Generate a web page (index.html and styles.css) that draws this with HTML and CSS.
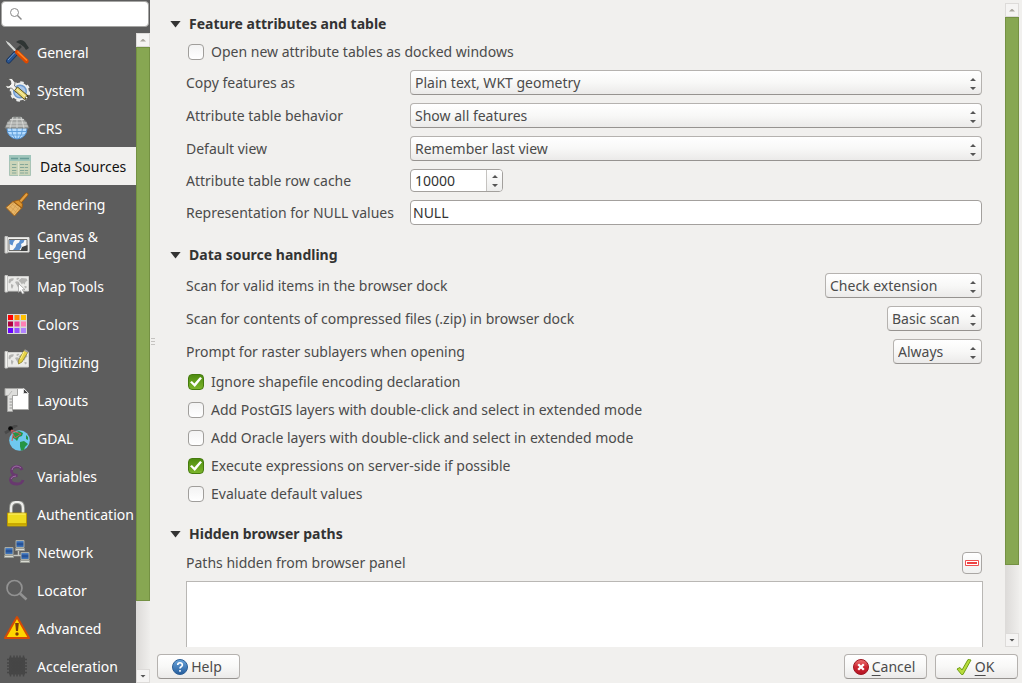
FILE: index.html
```html
<!DOCTYPE html>
<html lang="en">
<head>
<meta charset="utf-8">
<title>Options - Data Sources</title>
<link rel="stylesheet" href="styles.css">
</head>
<body>
<svg class="defs" aria-hidden="true">
  <defs>
    <linearGradient id="blueFill" x1="0" y1="0" x2="0" y2="1"><stop offset="0" stop-color="#6aa5dc"/><stop offset="1" stop-color="#245c9c"/></linearGradient>
    <linearGradient id="screen" x1="0" y1="0" x2="0" y2="1"><stop offset="0" stop-color="#5d94d6"/><stop offset="0.5" stop-color="#1d4a92"/><stop offset="1" stop-color="#4b82c5"/></linearGradient>
    <linearGradient id="redFill" x1="0" y1="0" x2="0" y2="1"><stop offset="0" stop-color="#ee7474"/><stop offset="0.5" stop-color="#cc2530"/><stop offset="1" stop-color="#b51425"/></linearGradient>
    <symbol id="arrows" viewBox="0 0 8 14">
      <path d="M1 4h6L4 1z M1 10h6L4 13z" fill="#555"/>
    </symbol>
    <symbol id="map" viewBox="0 0 26 26">
      <path d="M3 5.5h21.500v14.500H3z" fill="#ebebe9" stroke="#d0d0ce"/>
      <path d="M1 4.500h2.500v16.500H1z" fill="#f4f4f2" stroke="#c6c6c4"/>
      <path d="M5 8.500q3-2 5-1l-1 2-2 1-1 2-1.500-1zM7 13l2.500 1-.5 2-1 2-1-2zM12 8l2-1.500 1.500 1-2 1.500zM11 11q2-1.500 4 0l.5 2-1.500 3.500-1.500-3zM14.500 9.500l3-2.500 5 .5 1 2-2 1.500-1 2.500-1.500-1.500-1 1.500-1.500-2zM20 15.500q2-1 3 .5l-1.500 1.500z" fill="#b4b4b2"/>
    </symbol>
    <symbol id="pc" viewBox="0 0 10 11">
      <path d="M1 .5h8v7H1z" fill="url(#screen)" stroke="#a9aca5"/>
      <path d="M.5 8.5h9v2h-9z" fill="#d8dad2" stroke="#999b94"/>
    </symbol>
  </defs>
</svg>
<div class="window">
  <aside class="sidebar">
    <label class="search">
      <svg class="search-icon" viewBox="0 0 14 14"><circle cx="5.5" cy="5.5" r="4" fill="none" stroke="#8a8a8a"/><path d="M8.5 8.5l4 4" stroke="#8a8a8a" stroke-width="1.5"/></svg>
      <input type="text" aria-label="Search options">
    </label>
    <div class="pages">
      <nav class="page-list">
        <a class="page" href="#general">
          <svg viewBox="0 0 26 26"><path d="M1.500 1.500l4 2.500 8.500 9-1.500 1.500L3.500 5z" fill="#d7d9d6"/><path d="M11.500 14.500l-7 7.500" stroke="#15315c" stroke-width="5" stroke-linecap="round"/><path d="M11.500 14.500l-7 7.500" stroke="#2c5690" stroke-width="3.500" stroke-linecap="round"/><path d="M10.500 14l-6.500 7" stroke="#6f97c9"/><path d="M12 3q5-4 9 0l4 6-3 2-2-3q-3-3-8-5z" fill="#2f3534"/><path d="M17 7l-4.500 4.500" stroke="#383c3b" stroke-width="2.500"/><path d="M13 13l9.500 9.200" stroke="#dc4900" stroke-width="4.400" stroke-linecap="round"/><path d="M13.500 12.500l9.500 9" stroke="#ff8422" stroke-width="1.600"/></svg>
          <span>General</span></a>
        <a class="page" href="#system">
          <svg viewBox="0 0 26 26"><circle cx="16" cy="14.500" r="6.500" fill="#a9c6e8" stroke="#6c9bd2" stroke-width="2"/><circle cx="16" cy="14.500" r="8" fill="none" stroke="#eceeed" stroke-width="2"/><circle cx="16" cy="14.500" r="9.300" fill="none" stroke="#eceeed" stroke-width="2" stroke-dasharray="3.500 3.800"/><path d="M4 1.500l4 0 3 4-.5 3.500 5 4-3 3-5-5-4 .5-2.500-3 4 .5 2-2-.5-3z" fill="#f3f3f1" stroke="#4a4a48" stroke-width=".7"/><path d="M10.500 13.500l3-3.500 10 8.500-3 4z" fill="#e8d875" stroke="#5d521b"/><path d="M13 12.500l8.500 7" stroke="#fff5b0"/><path d="M23.500 17.500l1 3-3 2.500-1-2z" fill="#383113"/><circle cx="22.500" cy="20.500" r="1" fill="#fff"/></svg>
          <span>System</span></a>
        <a class="page" href="#crs">
          <svg viewBox="0 0 26 26"><circle cx="13" cy="14" r="10" fill="#b5dcff" stroke="#528cc9"/><path d="M13 13v11M3.500 16.500h19M5 20h16M7.500 13q0 7 4 11M18.500 13q0 7-4 11" fill="none" stroke="#609fdb"/><path d="M9 2h8l5 4.500 3 6.500H1l3-6.500z" fill="#a5a7a5" stroke="#7d807f"/><path d="M6 4.500h14M3 8h20M2 11h22M9 2L6 13M13 2v11M17 2l3 11" fill="none" stroke="#dcdddb" stroke-width=".8"/></svg>
          <span>CRS</span></a>
        <a class="page selected" href="#data-sources" aria-current="page">
          <svg viewBox="0 0 24 24"><path d="M1.500 1.500h21v20h-21z" fill="#cbd4b8" stroke="#a9c3b5"/><path d="M1 1h22v6H1z" fill="#9fc5bb"/><path d="M3 4.500h7M12 4.500h9" stroke="#679b95" stroke-width="1.300"/><path d="M4 10.500h5M12 10.500h8M4 13.500h5M12 13.500h8M4 16.500h5M12 16.500h8M4 19h5M12 19h8" stroke="#86a798" stroke-width="1.200" stroke-dasharray="4 .7"/><path d="M10.500 8v14" stroke="#e2e6d3"/></svg>
          <span>Data Sources</span></a>
        <a class="page" href="#rendering">
          <svg viewBox="0 0 26 26"><path d="M15 12l7.500-8.500" stroke="#9d5a0c" stroke-width="4" stroke-linecap="round"/><path d="M15 12l7.500-8.500" stroke="#e2a044" stroke-width="2.200" stroke-linecap="round"/><path d="M9 10.500l8.500 6.500-7 8L2 16.500z" fill="#e7b567" stroke="#a56417"/><path d="M5 14.500l7.500 7M7.500 12.500l7.500 6M4.500 18l6-7M7 21l6-8M10 23l6-8" stroke="#c99142" stroke-width=".5"/><path d="M9.500 10.500l5-1.500 4 4-.5 4z" fill="#dc952f" stroke="#9e5d12"/></svg>
          <span>Rendering</span></a>
        <a class="page wrapped" href="#canvas">
          <svg viewBox="0 0 26 26"><path d="M3 5.500h22v14.500H3z" fill="#efefed" stroke="#d9d9d7"/><path d="M1 4.500h2.500v16.500H1z" fill="#e6e6e4" stroke="#c2c2c0"/><path d="M5 7.500h18v11H5z" fill="#f8f8f7" stroke="#6b6b69"/><path d="M5.500 8h5.500l-1.500 2-1 3.500-3-1.500zM11.500 15l1-3 2.500-1.500 1-2.500h4.500l-1 2.500-2.500 1.500.5 2.500-2 3.500H9z" fill="#5b90cf"/><path d="M16.500 19l1.500-4 5.500-2v6z" fill="#3f4141"/></svg>
          <span>Canvas &amp; Legend</span></a>
        <a class="page" href="#map-tools">
          <svg class="raised" viewBox="0 2 26 26"><use href="#map" width="26" height="26"/><path d="M14.500 12.500v9l2-1.800 2 3.300 1.800-.8-2-3.500h2.700z" fill="#fff" stroke="#979795" stroke-width=".7"/></svg>
          <span>Map Tools</span></a>
        <a class="page" href="#colors">
          <svg viewBox="0 -1 26 26"><path d="M3 2h20v20H3z" fill="#d8d8d6"/><path d="M4 3h5v5H4z" fill="#f00"/><path d="M10.500 3h5v5h-5z" fill="#ff8c00"/><path d="M17 3h5v5h-5z" fill="#ffc000"/><path d="M4 9.500h5v5H4z" fill="#b00040"/><path d="M10.500 9.500h5v5h-5z" fill="#e83e9b"/><path d="M17 9.500h5v5h-5z" fill="#ff80b4"/><path d="M4 16h5v5H4z" fill="#6900ff"/><path d="M10.500 16h5v5h-5z" fill="#934fff"/><path d="M17 16h5v5h-5z" fill="#b183ff"/></svg>
          <span>Colors</span></a>
        <a class="page" href="#digitizing">
          <svg viewBox="0 2 26 26"><use href="#map" width="26" height="26"/><path d="M20.500 3l3.500 2-6 10-3.500 2 .2-4z" fill="#e6d246" stroke="#8e8127" stroke-width=".8"/><path d="M20 4.500L16.500 12" stroke="#fff28b"/><path d="M20.500 3l3.500 2" stroke="#9d9d9b" stroke-width="2"/></svg>
          <span>Digitizing</span></a>
        <a class="page" href="#layouts">
          <svg viewBox="0 0 26 26"><path d="M8 1.500h12l4.500 5v16H8z" fill="#fff" stroke="#a8a8a6"/><path d="M19.500 1.500v5h5z" fill="#444" stroke="#ddd"/><path d="M1 1.500h12.500v7H8.500v16H3.500v-16H1z" fill="#dededc" stroke="#a4a4a2"/><path d="M5.500 12H8M5.500 15H8M5.500 18H8M5.500 21H8" stroke="#858583" stroke-width=".8"/><path d="M4 9l4-5" stroke="#b9b9b7"/></svg>
          <span>Layouts</span></a>
        <a class="page" href="#gdal">
          <svg viewBox="0 -1 26 26"><path d="M1 7l5-3M8 2l5-3" stroke="#494949" stroke-width="3"/><circle cx="6.500" cy="2.500" r="2.300" fill="#080808"/><circle cx="15.500" cy="14.500" r="10.300" fill="#6fc8ef"/><path d="M9 7l6-2 4 2-1 3-3 1-2 4-2-2-2-1zM16 16l4-1 4 3-3 3-1 3-3 .5-1-4zM22 9l2 2v3l-2-1z" fill="#259545"/><path d="M7 4l4 8 6-4zM9 9l-1 6" fill="none" stroke="#d35858"/></svg>
          <span>GDAL</span></a>
        <a class="page" href="#variables">
          <svg viewBox="0 -1 26 26"><path d="M18 6q-1-3.500-5-3.500Q7.500 3 7.500 7q0 4 6 4.500Q6.500 12 6.500 16q.5 4 6.500 4 5 0 6-4" fill="none" stroke="#68396f" stroke-width="2.800"/><path d="M17 4q-2-2-5-2-4 1-4 4M7 15q1-3 5-3" fill="none" stroke="#9c70a4"/></svg>
          <span>Variables</span></a>
        <a class="page" href="#authentication">
          <svg viewBox="0 0 26 26"><path d="M7 14V7q0-6 6-6t6 6v7" fill="none" stroke="#8b8d88" stroke-width="4"/><path d="M7 14V7q0-6 6-6t6 6v7" fill="none" stroke="#ededeb" stroke-width="2.200"/><path d="M3.500 12h19v13h-19z" fill="#eedb20" stroke="#ba9700"/><path d="M4 22h18v2.500H4z" fill="#c9a900"/><path d="M4.500 13h17" stroke="#fff477"/></svg>
          <span>Authentication</span></a>
        <a class="page" href="#network">
          <svg viewBox="0 0 26 26"><path d="M14.500 11v5M8 16.500h10" stroke="#c5c7c1" stroke-width="1.500"/><use href="#pc" x="11" y="1" width="10" height="11"/><use href="#pc" x="0" y="8" width="10" height="11"/><use href="#pc" x="16" y="13" width="10" height="11"/></svg>
          <span>Network</span></a>
        <a class="page" href="#locator">
          <svg viewBox="0 -1 26 26"><circle cx="10.500" cy="10" r="7.500" fill="none" stroke="#929292" stroke-width="1.700"/><path d="M16 15.500l6.500 6" stroke="#929292" stroke-width="2.500"/></svg>
          <span>Locator</span></a>
        <a class="page" href="#advanced">
          <svg viewBox="0 0 26 26"><path d="M13 2l12 21H1z" fill="#ffd500" stroke="#d54a05" stroke-width="2" stroke-linejoin="round"/><path d="M11.200 8h3.600l-.8 8h-2z" fill="#7a3a09"/><circle cx="13" cy="19" r="1.700" fill="#7a3a09"/></svg>
          <span>Advanced</span></a>
        <a class="page" href="#acceleration">
          <svg viewBox="0 -1 26 26"><path d="M5 3.500h16v17H5z" fill="#464646"/><path d="M6.500 1.500v21M10 1.500v21M13 1.500v21M16 1.500v21M19.500 1.500v21M3 5.500h20M3 9h20M3 12h20M3 15h20M3 18.500h20" stroke="#464646" stroke-width="1.500"/></svg>
          <span>Acceleration</span></a>
      </nav>
      <div class="scrollbar list-bar">
        <button class="step up" type="button" aria-label="Scroll up"></button>
        <div class="track"><div class="thumb"></div></div>
        <button class="step down" type="button" aria-label="Scroll down"></button>
      </div>
    </div>
  </aside>
  <div class="splitter"><i></i><i></i><i></i></div>
  <main class="main">
    <div class="scroll-area">
      <form class="content">
        <section>
          <h2>Feature attributes and table</h2>
          <div class="body">
            <label class="check first"><input type="checkbox">Open new attribute tables as docked windows</label>
            <div class="form">
              <label for="copy">Copy features as</label>
              <span class="combo"><select id="copy"><option>Plain text, WKT geometry</option></select><svg><use href="#arrows"/></svg></span>
              <label for="behavior">Attribute table behavior</label>
              <span class="combo"><select id="behavior"><option>Show all features</option></select><svg><use href="#arrows"/></svg></span>
              <label for="view">Default view</label>
              <span class="combo"><select id="view"><option>Remember last view</option></select><svg><use href="#arrows"/></svg></span>
              <label for="cache">Attribute table row cache</label>
              <span class="spin"><input id="cache" type="text" value="10000"><span class="spin-arrows"><svg><use href="#arrows"/></svg></span></span>
              <label for="null">Representation for NULL values</label>
              <input class="field" id="null" type="text" value="NULL">
            </div>
          </div>
        </section>
        <section class="sources">
          <h2>Data source handling</h2>
          <div class="body">
            <div class="rows">
              <div class="row"><label for="scan">Scan for valid items in the browser dock</label>
                <span class="combo w-l"><select id="scan"><option>Check extension</option></select><svg><use href="#arrows"/></svg></span></div>
              <div class="row"><label for="zip">Scan for contents of compressed files (.zip) in browser dock</label>
                <span class="combo w-m"><select id="zip"><option>Basic scan</option></select><svg><use href="#arrows"/></svg></span></div>
              <div class="row"><label for="prompt">Prompt for raster sublayers when opening</label>
                <span class="combo w-s"><select id="prompt"><option>Always</option></select><svg><use href="#arrows"/></svg></span></div>
            </div>
            <div class="checks">
              <label class="check"><input type="checkbox" checked>Ignore shapefile encoding declaration</label>
              <label class="check"><input type="checkbox">Add PostGIS layers with double-click and select in extended mode</label>
              <label class="check"><input type="checkbox">Add Oracle layers with double-click and select in extended mode</label>
              <label class="check"><input type="checkbox" checked>Execute expressions on server-side if possible</label>
              <label class="check"><input type="checkbox">Evaluate default values</label>
            </div>
          </div>
        </section>
        <section>
          <h2>Hidden browser paths</h2>
          <div class="body">
            <div class="row paths"><label for="paths">Paths hidden from browser panel</label>
              <button class="remove" type="button" aria-label="Remove path"><svg viewBox="0 0 14 6"><path d="M.5.5h13v5H.5z" fill="#fff" stroke="#ee5050"/><path d="M2 2h10v2H2z" fill="#ee4242"/></svg></button></div>
            <select class="path-list" id="paths" size="8"></select>
          </div>
        </section>
      </form>
      <div class="scrollbar main-bar">
        <button class="step up" type="button" aria-label="Scroll up"></button>
        <div class="track"><div class="thumb"></div></div>
        <button class="step down" type="button" aria-label="Scroll down"></button>
      </div>
    </div>
    <footer class="buttons">
      <button class="btn help" type="button"><svg viewBox="0 0 16 16"><circle cx="8" cy="8" r="7.500" fill="url(#blueFill)" stroke="#2d5f96"/><path d="M5.700 6q0-2.300 2.300-2.300T10.400 6q0 1-1.200 1.700T8 9.600M8 11v1.700" fill="none" stroke="#fff" stroke-width="1.600"/></svg><span>Help</span></button>
      <button class="btn" type="button"><svg viewBox="0 0 16 16"><circle cx="8" cy="8" r="7.500" fill="url(#redFill)" stroke="#9d1722"/><path d="M5.200 5.200l5.600 5.600M10.800 5.200l-5.600 5.600" stroke="#fff" stroke-width="2.300"/></svg><span><u>C</u>ancel</span></button>
      <button class="btn" type="button"><svg viewBox="0 0 16 16"><path d="M1 10l3-1.500 2 2.500 6-10.500 3 .5L7 15.500H5.500z" fill="#b8dc3c" stroke="#6f9e16"/></svg><span><u>O</u>K</span></button>
    </footer>
  </main>
</div>
</body>
</html>
```
FILE: styles.css
```css
* { box-sizing: border-box; }
body {
  margin: 0;
  background: #f1f0ee;
  color: #4b4b4b;
  font: 14px/20px "Noto Sans", "Open Sans", sans-serif;
}
button, input, select { font: inherit; color: inherit; margin: 0; }
.defs { position: absolute; width: 0; height: 0; }
.window { display: flex; height: 100vh; overflow: hidden; }

/* Sidebar */
.sidebar { display: flex; flex-direction: column; flex: none; width: 150px; background: #5d5d5d; }
.search {
  display: flex;
  align-items: center;
  height: 26px;
  margin: 1px 1px 0;
  padding-left: 7px;
  background: #fff;
  border: 1px solid #a5a5a3;
  border-radius: 4px;
}
.search-icon { flex: none; width: 14px; height: 14px; }
.search input { width: 100%; min-width: 0; border: 0; background: none; outline: 0; }
.pages { display: flex; flex: 1; min-height: 0; padding-top: 6px; }
.page-list { flex: 1; min-width: 0; overflow: hidden; }
.page {
  display: flex;
  align-items: center;
  gap: 7px;
  height: 38px;
  padding-left: 4px;
  color: #fff;
  line-height: 17px;
  text-decoration: none;
  white-space: nowrap;
}
.page svg { flex: none; width: 26px; height: 26px; }
.page.wrapped { height: 44px; white-space: normal; }
.page.wrapped span { width: 70px; }
.page.selected { gap: 8px; padding-left: 8px; background: #f1f0ee; color: #111; }
.page.selected svg { width: 24px; height: 24px; }

/* Scrollbars */
.scrollbar { display: flex; flex-direction: column; flex: none; width: 14px; }
.track { flex: 1; background: linear-gradient(90deg, #dcdad8, #efeeec); }
.thumb { height: 89%; background: #87a752; border: 1px solid #749143; }
.step {
  display: grid;
  place-items: center;
  height: 14px;
  padding: 0;
  background: #f5f4f3;
  border: 1px solid #dddbd9;
}
.step::before { content: ""; width: 6px; height: 3px; background: #aaa79f; clip-path: polygon(50% 0, 100% 100%, 0 100%); }
.step.down::before { background: #555; clip-path: polygon(0 0, 100% 0, 50% 100%); }

.splitter {
  display: flex;
  flex-direction: column;
  justify-content: center;
  gap: 2px;
  flex: none;
  width: 6px;
  padding-left: 1px;
}
.splitter i { width: 4px; height: 1px; background: #c5c3c0; }

/* Main pane */
.main { display: flex; flex-direction: column; flex: 1; min-width: 0; }
.scroll-area { display: flex; flex: 1; min-height: 0; padding: 3px 3px 0 0; overflow: hidden; }
.content { flex: 1; min-width: 0; padding: 11px 22px 0 14px; overflow: hidden; }
h2 {
  display: flex;
  align-items: center;
  gap: 8px;
  margin: 0;
  color: #333;
  font-size: 14px;
  line-height: 20px;
}
h2::before { content: ""; width: 11px; height: 7px; background: #333; clip-path: polygon(0 0, 100% 0, 50% 100%); }
.body { padding-left: 16px; }
section + section { margin-top: 20px; }
section.sources { margin-bottom: -4px; }

.check { display: flex; align-items: center; gap: 7px; width: max-content; height: 28px; padding-left: 2px; }
.check.first { margin: 4px 0; }
.check input {
  display: grid;
  place-items: center;
  appearance: none;
  width: 16px;
  height: 16px;
  background: linear-gradient(#f3f3f3, #fff);
  border: 1px solid #a09e9b;
  border-radius: 4px;
}
.check input:checked { background: linear-gradient(#4e8c10, #7cb52b); border-color: #457b0e; }
.check input:checked::before {
  content: "";
  width: 12px;
  height: 10px;
  background: #fff;
  clip-path: polygon(0 52%, 16% 40%, 36% 65%, 84% 0, 100% 12%, 40% 100%);
}

.form { display: grid; grid-template-columns: 216px 1fr; gap: 8px; align-items: center; padding-right: 1px; }
.combo { display: grid; align-items: center; height: 25px; }
.combo select, .combo svg { grid-area: 1 / 1; }
.combo select {
  appearance: none;
  width: 100%;
  height: 25px;
  padding: 0 16px 0 4px;
  background: linear-gradient(#fff, #f8f8f7 50%, #ebeae9);
  border: 1px solid #b5b2af;
  border-bottom-color: #969390;
  border-radius: 4px;
}
.combo svg { justify-self: end; width: 8px; height: 14px; margin: 3px 5px 0 0; pointer-events: none; }
.w-l { width: 157px; }
.w-m { width: 95px; }
.w-s { width: 89px; }
.field, .path-list, .spin { background: #fff; border: 1px solid #a3a09d; border-radius: 4px; outline: 0; }
.field { width: 100%; height: 25px; padding: 0 2px; color: #333; }
.spin { display: flex; width: 93px; height: 23px; overflow: hidden; }
.spin input { flex: 1; min-width: 0; padding: 0 4px; border: 0; outline: 0; background: none; color: #333; }
.spin-arrows { display: grid; place-items: center; width: 16px; background: linear-gradient(#fff, #ededec); border-left: 1px solid #c5c3c0; }
.spin-arrows svg { width: 8px; height: 14px; }

.rows { display: flex; flex-direction: column; gap: 8px; padding: 8px 0 4px; }
.row { display: flex; align-items: center; justify-content: space-between; padding-right: 1px; }
.paths { height: 37px; }
.remove {
  display: grid;
  place-items: center;
  width: 20px;
  height: 22px;
  padding: 0;
  background: linear-gradient(#fff, #f0f0ef);
  border: 1px solid #aaa7a4;
  border-radius: 4px;
}
.remove svg { width: 14px; height: 6px; }
.path-list { display: block; width: 100%; height: 190px; border-color: #b9b7b4; border-radius: 0; }

/* Footer */
.buttons { display: flex; gap: 8px; padding: 7px 4px 4px 1px; }
.help { margin-right: auto; }
.btn {
  display: flex;
  align-items: center;
  justify-content: center;
  gap: 3px;
  width: 83px;
  height: 25px;
  padding: 0 3px 0 0;
  background: linear-gradient(#fff, #f8f8f7 50%, #ebeae9);
  border: 1px solid #b5b2af;
  border-bottom-color: #969390;
  border-radius: 4px;
}
.btn svg { width: 16px; height: 16px; }
.btn u { text-underline-offset: 3px; }
```
